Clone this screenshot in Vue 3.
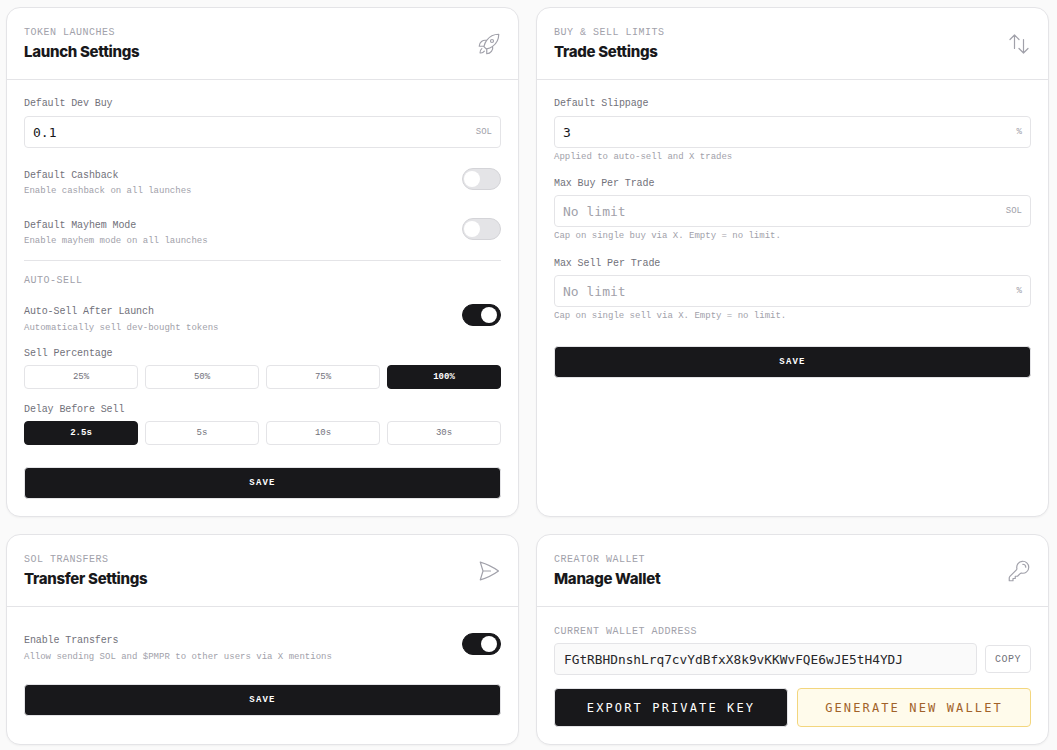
<script setup>
const sellOpts = [
  { label: '25%' }, { label: '50%' }, { label: '75%' }, { label: '100%', on: true }
]
const delayOpts = [
  { label: '2.5s', on: true }, { label: '5s' }, { label: '10s' }, { label: '30s' }
]
</script>

<template>
  <div class="page">
    <section class="card">
      <header class="head">
        <div>
          <div class="eyebrow">TOKEN LAUNCHES</div>
          <h2 class="title">Launch Settings</h2>
        </div>
        <svg class="icon" viewBox="0 0 24 24"><path d="M15.59 14.37a6 6 0 0 1-5.84 7.38v-4.8m5.84-2.58a14.98 14.98 0 0 0 6.16-12.12A14.98 14.98 0 0 0 9.631 8.41m5.96 5.96a14.926 14.926 0 0 1-5.841 2.58m-.119-8.54a6 6 0 0 0-7.381 5.84h4.8m2.581-5.84a14.927 14.927 0 0 0-2.58 5.84m2.699 2.7c-.103.021-.207.041-.311.06a15.09 15.09 0 0 1-2.448-2.448 14.9 14.9 0 0 1 .06-.312m-2.24 2.39a4.493 4.493 0 0 0-1.757 4.306 4.493 4.493 0 0 0 4.306-1.758M16.5 9a1.5 1.5 0 1 1-3 0 1.5 1.5 0 0 1 3 0Z"/></svg>
      </header>
      <div class="body">
        <div class="label">Default Dev Buy</div>
        <div class="input mt5"><span class="val">0.1</span><span class="unit">SOL</span></div>
        <div class="row mt20">
          <div class="txt"><div class="label">Default Cashback</div><div class="desc">Enable cashback on all launches</div></div>
          <span class="toggle"></span>
        </div>
        <div class="row mt20">
          <div class="txt"><div class="label">Default Mayhem Mode</div><div class="desc">Enable mayhem mode on all launches</div></div>
          <span class="toggle"></span>
        </div>
        <div class="divider"></div>
        <div class="section">AUTO-SELL</div>
        <div class="row mt16">
          <div class="txt"><div class="label">Auto-Sell After Launch</div><div class="desc d2">Automatically sell dev-bought tokens</div></div>
          <span class="toggle on"></span>
        </div>
        <div class="label mt12">Sell Percentage</div>
        <div class="seg">
          <span v-for="o in sellOpts" :key="o.label" class="opt" :class="{ on: o.on }">{{ o.label }}</span>
        </div>
        <div class="label mt14">Delay Before Sell</div>
        <div class="seg">
          <span v-for="o in delayOpts" :key="o.label" class="opt" :class="{ on: o.on }">{{ o.label }}</span>
        </div>
        <div class="save mt22">SAVE</div>
      </div>
    </section>

    <section class="card">
      <header class="head">
        <div>
          <div class="eyebrow">BUY &amp; SELL LIMITS</div>
          <h2 class="title">Trade Settings</h2>
        </div>
        <svg class="icon" viewBox="0 0 24 24"><path d="M3 7.5 7.5 3m0 0L12 7.5M7.5 3v13.5m13.5 0L16.5 21m0 0L12 16.5m4.5 4.5V7.5"/></svg>
      </header>
      <div class="body">
        <div class="label">Default Slippage</div>
        <div class="input mt5"><span class="val">3</span><span class="unit">%</span></div>
        <div class="hint">Applied to auto-sell and X trades</div>
        <div class="label mt14">Max Buy Per Trade</div>
        <div class="input mt4"><span class="val ph">No limit</span><span class="unit">SOL</span></div>
        <div class="hint">Cap on single buy via X. Empty = no limit.</div>
        <div class="label mt15">Max Sell Per Trade</div>
        <div class="input mt4"><span class="val ph">No limit</span><span class="unit">%</span></div>
        <div class="hint">Cap on single sell via X. Empty = no limit.</div>
        <div class="save mt24">SAVE</div>
      </div>
    </section>

    <section class="card">
      <header class="head">
        <div>
          <div class="eyebrow">SOL TRANSFERS</div>
          <h2 class="title">Transfer Settings</h2>
        </div>
        <svg class="icon" viewBox="0 0 24 24"><path d="M6 12 3.269 3.125A59.769 59.769 0 0 1 21.485 12 59.768 59.768 0 0 1 3.27 20.875L5.999 12Zm0 0h7.5"/></svg>
      </header>
      <div class="body transfer">
        <div class="row">
          <div class="txt"><div class="label">Enable Transfers</div><div class="desc d2">Allow sending SOL and $PMPR to other users via X mentions</div></div>
          <span class="toggle on"></span>
        </div>
        <div class="save mt20">SAVE</div>
      </div>
    </section>

    <section class="card">
      <header class="head">
        <div>
          <div class="eyebrow">CREATOR WALLET</div>
          <h2 class="title">Manage Wallet</h2>
        </div>
        <svg class="icon" viewBox="0 0 24 24"><path d="M15.75 5.25a3 3 0 0 1 3 3m3 0a6 6 0 0 1-7.029 5.912c-.563-.097-1.159.026-1.563.43L10.5 17.25H8.25v2.25H6v2.25H2.25v-2.818c0-.597.237-1.17.659-1.591l6.499-6.499c.404-.404.527-1 .43-1.563A6 6 0 1 1 21.75 8.25Z"/></svg>
      </header>
      <div class="body wallet">
        <div class="eyebrow">CURRENT WALLET ADDRESS</div>
        <div class="addr-row">
          <div class="addr">FGtRBHDnshLrq7cvYdBfxX8k9vKKWvFQE6wJE5tH4YDJ</div>
          <span class="copy">COPY</span>
        </div>
        <div class="actions">
          <span class="act dark">EXPORT PRIVATE KEY</span>
          <span class="act warn">GENERATE NEW WALLET</span>
        </div>
      </div>
    </section>
  </div>
</template>

<style>
html, body { background: #fafafa; }
</style>

<style scoped>
.page {
  box-sizing: border-box;
  width: 1057px;
  height: 750px;
  overflow: hidden;
  padding: 7px 7px 0 6px;
  display: grid;
  grid-template-columns: 513px 513px;
  grid-template-rows: 510px 211px;
  gap: 17px 17px;
  font-family: "Liberation Mono", monospace;
}
.card {
  box-sizing: border-box;
  background: #fff;
  border: 1px solid #e4e4e7;
  border-radius: 14px;
  box-shadow: 0 1px 2px rgba(0,0,0,.04);
  overflow: hidden;
}
.head {
  box-sizing: border-box;
  height: 72px;
  border-bottom: 1px solid #e4e4e7;
  padding: 0 17px;
  display: flex;
  align-items: center;
  justify-content: space-between;
}
.eyebrow {
  font-size: 10px;
  line-height: 14px;
  letter-spacing: .5px;
  color: #a1a1aa;
}
.title {
  margin: 2px 0 0;
  font-family: Inter, sans-serif;
  font-size: 15px;
  line-height: 20px;
  font-weight: 800;
  letter-spacing: -.3px;
  color: #18181b;
}
.icon {
  width: 24px;
  height: 24px;
  fill: none;
  stroke: #a1a1aa;
  stroke-width: 1.2;
  stroke-linecap: round;
  stroke-linejoin: round;
}
.body { padding: 17px 17px 0; }
.label {
  font-size: 10px;
  line-height: 14px;
  letter-spacing: -.1px;
  color: #71717a;
}
.desc {
  font-size: 9px;
  line-height: 14px;
  margin-top: 1px;
  color: #a1a1aa;
}
.desc.d2 { margin-top: 2px; }
.hint {
  font-size: 9px;
  line-height: 12px;
  margin-top: 3px;
  color: #a1a1aa;
}
.input {
  box-sizing: border-box;
  height: 32px;
  border: 1px solid #e4e4e7;
  border-radius: 4px;
  padding: 0 8px;
  display: flex;
  align-items: center;
  justify-content: space-between;
}
.val {
  font-family: "DejaVu Sans Mono", monospace;
  font-size: 13px;
  color: #18181b;
}
.val.ph { color: #a1a1aa; }
.unit { font-size: 9px; color: #a1a1aa; }
.row {
  display: flex;
  align-items: flex-start;
  justify-content: space-between;
}
.txt { padding-top: 1px; }
.toggle {
  box-sizing: border-box;
  width: 39px;
  height: 22px;
  border-radius: 11px;
  background: #e4e4e7;
  border: 1px solid #d4d4d8;
  position: relative;
}
.toggle::after {
  content: "";
  position: absolute;
  left: 1px;
  top: 2px;
  width: 16px;
  height: 16px;
  border-radius: 50%;
  background: #fff;
}
.toggle.on { background: #18181b; border-color: #18181b; }
.toggle.on::after { left: auto; right: 3px; }
.divider { height: 1px; background: #e4e4e7; margin-top: 12px; }
.section {
  font-size: 10px;
  line-height: 14px;
  letter-spacing: .5px;
  color: #a1a1aa;
  margin-top: 13px;
}
.seg {
  display: grid;
  grid-template-columns: repeat(4, 1fr);
  gap: 7px;
  margin-top: 4px;
}
.opt {
  box-sizing: border-box;
  height: 24px;
  border: 1px solid #e4e4e7;
  border-radius: 4px;
  font-size: 9px;
  color: #71717a;
  display: flex;
  align-items: center;
  justify-content: center;
}
.opt.on {
  background: #18181b;
  border-color: #18181b;
  color: #fff;
  font-weight: 700;
}
.save {
  box-sizing: border-box;
  height: 32px;
  background: #18181b;
  border: 1px solid #e4e4e7;
  border-radius: 4px;
  color: #fff;
  font-size: 9px;
  font-weight: 700;
  letter-spacing: 1.2px;
  display: flex;
  align-items: center;
  justify-content: center;
}
.mt4 { margin-top: 4px; }
.mt5 { margin-top: 5px; }
.mt12 { margin-top: 12px; }
.mt14 { margin-top: 14px; }
.mt15 { margin-top: 15px; }
.mt16 { margin-top: 16px; }
.mt20 { margin-top: 20px; }
.mt22 { margin-top: 22px; }
.mt24 { margin-top: 24px; }
.transfer { padding-top: 26px; }
.wallet { padding-top: 18px; }
.addr-row {
  display: flex;
  align-items: center;
  gap: 8px;
  margin-top: 4px;
}
.addr {
  box-sizing: border-box;
  flex: 1;
  height: 32px;
  background: #fafafa;
  border: 1px solid #e4e4e7;
  border-radius: 4px;
  padding: 0 9px;
  display: flex;
  align-items: center;
  font-family: "DejaVu Sans Mono", monospace;
  font-size: 12.8px;
  color: #27272a;
}
.copy {
  box-sizing: border-box;
  width: 46px;
  height: 28px;
  border: 1px solid #e4e4e7;
  border-radius: 4px;
  font-size: 10px;
  letter-spacing: .5px;
  color: #71717a;
  display: flex;
  align-items: center;
  justify-content: center;
}
.actions {
  display: grid;
  grid-template-columns: 1fr 1fr;
  gap: 9px;
  margin-top: 13px;
}
.act {
  box-sizing: border-box;
  height: 39px;
  border-radius: 4px;
  font-family: "DejaVu Sans Mono", monospace;
  font-size: 12px;
  letter-spacing: 2.13px;
  display: flex;
  align-items: center;
  justify-content: center;
}
.act.dark { background: #18181b; color: #fff; border: 1px solid #e4e4e7; }
.act.warn { background: #fffbeb; color: #a1622a; border: 1px solid #f3d67e; }
</style>
